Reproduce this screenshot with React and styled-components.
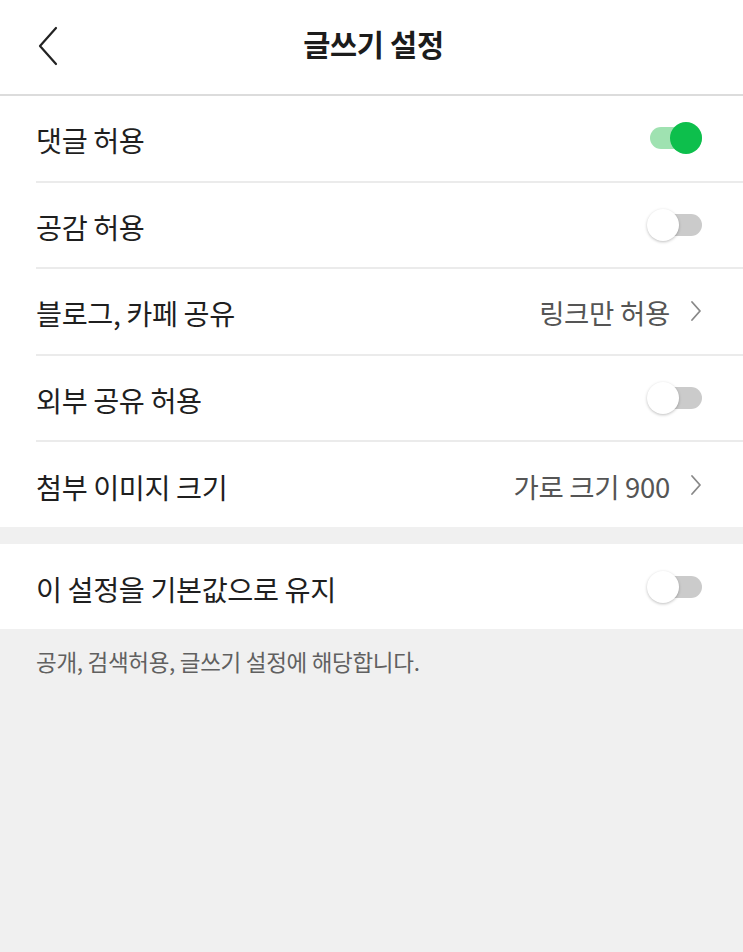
import React from "react";
import styled, { createGlobalStyle } from "styled-components";

const Global = createGlobalStyle`
  html, body { margin: 0; padding: 0; background: #f0f0f0; }
  body { font-family: "Noto Sans CJK KR", "Noto Sans", sans-serif; -webkit-font-smoothing: antialiased; }
  * { box-sizing: border-box; }
`;

const Page = styled.div`
  width: 743px;
  min-height: 952px;
  background: #f0f0f0;
`;

const Header = styled.header`
  height: 96px;
  background: #fff;
  border-bottom: 2px solid #dcdcdc;
  position: relative;
  display: flex;
  align-items: center;
  justify-content: center;
`;

const BackButton = styled.button`
  position: absolute;
  left: 30px;
  top: 22px;
  width: 36px;
  height: 48px;
  border: 0;
  background: none;
  padding: 0;
  display: flex;
  align-items: center;
  justify-content: center;
`;

const Title = styled.h1`
  margin: 0 0 8px 4px;
  font-size: 29.5px;
  font-weight: 700;
  color: #1c1c1c;
  letter-spacing: -0.3px;
`;

const Section = styled.section`
  background: #fff;
  margin-top: ${(p) => (p.$gap ? "17px" : "0")};
`;

const Row = styled.div`
  padding-left: 36px;
  background: #fff;
`;

const RowInner = styled.div`
  height: ${(p) => (p.$last ? "85px" : "86.5px")};
  display: flex;
  align-items: center;
  justify-content: space-between;
  padding-right: 41px;
  border-bottom: ${(p) => (p.$last ? "none" : "2px solid #ebebeb")};
`;

const Label = styled.span`
  font-size: 28.3px;
  color: #1f1f1f;
  letter-spacing: -0.4px;
  line-height: 1.2;
  padding-top: 4px;
`;

const ValueWrap = styled.span`
  display: flex;
  align-items: center;
  gap: 20px;
`;

const Value = styled.span`
  font-size: 27.5px;
  color: #555;
  letter-spacing: -0.3px;
  line-height: 1.2;
  padding-top: 3px;
`;

const Track = styled.span`
  position: relative;
  width: 52px;
  height: 34px;
  display: inline-block;
  &::before {
    content: "";
    position: absolute;
    left: ${(p) => (p.$on ? "0" : "5px")};
    right: 0;
    top: 6px;
    height: 22px;
    border-radius: 11px;
    background: ${(p) => (p.$on ? "#9fe2b1" : "#cbcbcb")};
  }
`;

const Knob = styled.span`
  position: absolute;
  top: 1px;
  left: ${(p) => (p.$on ? "20px" : "-3px")};
  width: 32px;
  height: 32px;
  border-radius: 50%;
  background: ${(p) => (p.$on ? "#0dbf4c" : "#fff")};
  box-shadow: ${(p) => (p.$on ? "none" : "0 1px 3px rgba(0,0,0,0.25)")};
`;

const Note = styled.p`
  margin: 0;
  padding: 16px 36px;
  font-size: 22.5px;
  color: #606060;
  letter-spacing: -0.3px;
`;

const Toggle = ({ on }) => (
  <Track $on={on}>
    <Knob $on={on} />
  </Track>
);

const Chevron = () => (
  <svg width="12" height="24" viewBox="0 0 12 24">
    <path d="M2 3 L10 12 L2 21" fill="none" stroke="#888" strokeWidth="1.8" strokeLinecap="round" strokeLinejoin="round" />
  </svg>
);

const items = [
  { label: "댓글 허용", toggle: true, on: true },
  { label: "공감 허용", toggle: true, on: false },
  { label: "블로그, 카페 공유", value: "링크만 허용" },
  { label: "외부 공유 허용", toggle: true, on: false },
  { label: "첨부 이미지 크기", value: "가로 크기 900" },
];

export default function App() {
  return (
    <Page>
      <Global />
      <Header>
        <BackButton aria-label="뒤로">
          <svg width="24" height="42" viewBox="0 0 24 42">
            <path d="M20 3 L4 21 L20 39" fill="none" stroke="#222" strokeWidth="2.2" strokeLinecap="round" strokeLinejoin="round" />
          </svg>
        </BackButton>
        <Title>글쓰기 설정</Title>
      </Header>
      <Section>
        {items.map((it, i) => (
          <Row key={it.label}>
            <RowInner $last={i === items.length - 1}>
              <Label>{it.label}</Label>
              {it.toggle ? (
                <Toggle on={it.on} />
              ) : (
                <ValueWrap>
                  <Value>{it.value}</Value>
                  <Chevron />
                </ValueWrap>
              )}
            </RowInner>
          </Row>
        ))}
      </Section>
      <Section $gap>
        <Row>
          <RowInner $last>
            <Label>이 설정을 기본값으로 유지</Label>
            <Toggle on={false} />
          </RowInner>
        </Row>
      </Section>
      <Note>공개, 검색허용, 글쓰기 설정에 해당합니다.</Note>
    </Page>
  );
}
